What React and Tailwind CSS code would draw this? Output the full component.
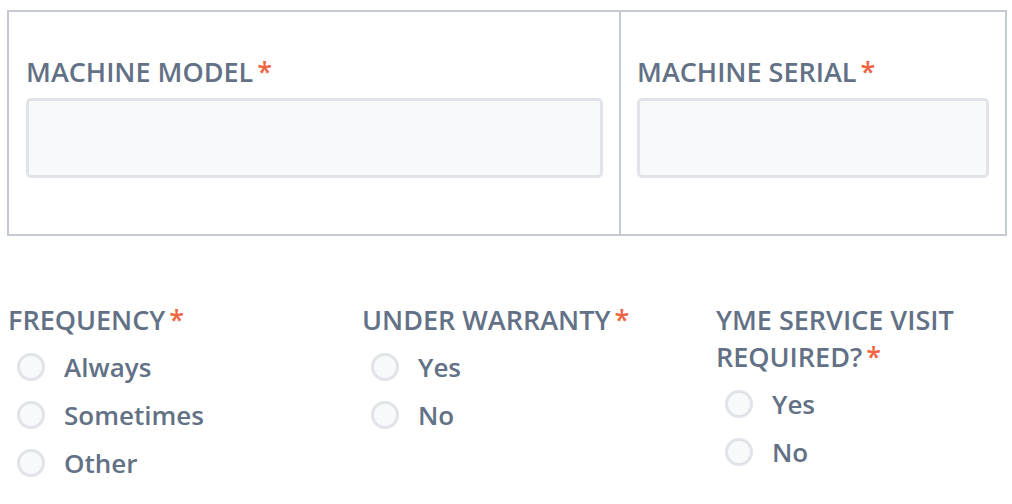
const labelCls = "text-[27px] leading-[37px] font-semibold text-[#627186]";

function Req() {
  return <span className="ml-[4px] text-[#f2643f]">*</span>;
}

function Radio({ label }) {
  return (
    <label className="flex h-[48px] items-center">
      <span className="ml-[9px] h-[28px] w-[28px] shrink-0 rounded-full border-[3px] border-[#e1e3e8] bg-[#f8f9fb]" />
      <span className="ml-[19px] text-[26px] font-semibold text-[#627186]">{label}</span>
    </label>
  );
}

function Group({ title, options }) {
  return (
    <div className="flex flex-col">
      <div className={labelCls}>
        {title}
        <Req />
      </div>
      <div className="mt-[5px] flex flex-col">
        {options.map((o) => (
          <Radio key={o} label={o} />
        ))}
      </div>
    </div>
  );
}

export default function App() {
  return (
    <div className="min-h-screen bg-white px-[7px] pt-[10px]" style={{ fontFamily: '"Open Sans", "Noto Sans", sans-serif' }}>
      <div className="flex w-[1000px] border-2 border-[#c5cad2]">
        <div className="w-[612px] border-r-2 border-[#c5cad2] pl-[17px] pr-[16px] pt-[41px] pb-[56px]">
          <div className={labelCls}>
            MACHINE MODEL
            <Req />
          </div>
          <div className="mt-[8px] h-[80px] rounded-[5px] border-[3px] border-[#e1e3e8] bg-[#f8f9fb]" />
        </div>
        <div className="flex-1 pl-[16px] pr-[16px] pt-[41px] pb-[56px]">
          <div className={labelCls}>
            MACHINE SERIAL
            <Req />
          </div>
          <div className="mt-[8px] h-[80px] rounded-[5px] border-[3px] border-[#e1e3e8] bg-[#f8f9fb]" />
        </div>
      </div>
      <div className="mt-[65px] grid grid-cols-[354px_354px_290px] pl-[1px]">
        <Group title="FREQUENCY" options={["Always", "Sometimes", "Other"]} />
        <Group title="UNDER WARRANTY" options={["Yes", "No"]} />
        <div className="w-[270px]">
          <Group title="YME SERVICE VISIT REQUIRED?" options={["Yes", "No"]} />
        </div>
      </div>
    </div>
  );
}
